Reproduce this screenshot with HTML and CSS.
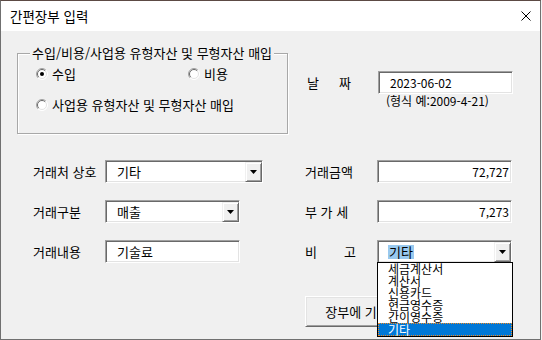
FILE: index.html
```html
<!DOCTYPE html>
<html lang="ko">
<head>
<meta charset="utf-8">
<title>간편장부 입력</title>
<link rel="stylesheet" href="styles.css">
</head>
<body>
<div class="window">
  <div class="titlebar">
    <span class="title">간편장부 입력</span>
    <svg class="close" width="10" height="10" viewBox="0 0 10 10"><path d="M0.5 0.5 L9.5 9.5 M9.5 0.5 L0.5 9.5" stroke="#000" stroke-width="1" fill="none"/></svg>
  </div>
  <div class="content">
    <div class="top">
      <div class="group">
        <div class="group-title">수입/비용/사업용 유형자산 및 무형자산 매입</div>
        <div class="radio-row">
          <label class="radio first">
            <svg class="rb" width="12" height="12" viewBox="0 0 12 12"><circle cx="6" cy="6" r="5.5" fill="#fff"/><path d="M9.9 2.1 A5.5 5.5 0 0 0 2.1 9.9" fill="none" stroke="#a0a0a0"/><path d="M9.2 2.8 A4.5 4.5 0 0 0 2.8 9.2" fill="none" stroke="#696969"/><path d="M2.1 9.9 A5.5 5.5 0 0 0 9.9 2.1" fill="none" stroke="#fff"/><path d="M2.8 9.2 A4.5 4.5 0 0 0 9.2 2.8" fill="none" stroke="#e3e3e3"/><circle cx="6" cy="6" r="2" fill="#000"/></svg>
            <span>수입</span>
          </label>
          <label class="radio">
            <svg class="rb" width="12" height="12" viewBox="0 0 12 12"><circle cx="6" cy="6" r="5.5" fill="#fff"/><path d="M9.9 2.1 A5.5 5.5 0 0 0 2.1 9.9" fill="none" stroke="#a0a0a0"/><path d="M9.2 2.8 A4.5 4.5 0 0 0 2.8 9.2" fill="none" stroke="#696969"/><path d="M2.1 9.9 A5.5 5.5 0 0 0 9.9 2.1" fill="none" stroke="#fff"/><path d="M2.8 9.2 A4.5 4.5 0 0 0 9.2 2.8" fill="none" stroke="#e3e3e3"/></svg>
            <span>비용</span>
          </label>
        </div>
        <div class="radio-row second">
          <label class="radio">
            <svg class="rb" width="12" height="12" viewBox="0 0 12 12"><circle cx="6" cy="6" r="5.5" fill="#fff"/><path d="M9.9 2.1 A5.5 5.5 0 0 0 2.1 9.9" fill="none" stroke="#a0a0a0"/><path d="M9.2 2.8 A4.5 4.5 0 0 0 2.8 9.2" fill="none" stroke="#696969"/><path d="M2.1 9.9 A5.5 5.5 0 0 0 9.9 2.1" fill="none" stroke="#fff"/><path d="M2.8 9.2 A4.5 4.5 0 0 0 9.2 2.8" fill="none" stroke="#e3e3e3"/></svg>
            <span>사업용 유형자산 및 무형자산 매입</span>
          </label>
        </div>
      </div>
      <div class="date-block">
        <div class="date-row">
          <span class="label"><span class="spread w44"><span>날</span><span>짜</span></span></span>
          <div class="field num">2023-06-02</div>
        </div>
        <div class="hint">(형식 예:2009-4-21)</div>
      </div>
    </div>

    <div class="form">
      <span class="label">거래처 상호</span>
      <div class="combo w158">
        <span class="combo-text">기타</span>
        <span class="combo-btn"><svg width="7" height="4" viewBox="0 0 7 4"><path d="M0 0 H7 L3.5 4 Z" fill="#000"/></svg></span>
      </div>
      <span class="spacer"></span>
      <span class="label">거래금액</span>
      <div class="field num right">72,727</div>

      <span class="label">거래구분</span>
      <div class="combo w135">
        <span class="combo-text">매출</span>
        <span class="combo-btn"><svg width="7" height="4" viewBox="0 0 7 4"><path d="M0 0 H7 L3.5 4 Z" fill="#000"/></svg></span>
      </div>
      <span class="spacer"></span>
      <span class="label">부 가 세</span>
      <div class="field num right">7,273</div>

      <span class="label">거래내용</span>
      <div class="field w135">기술료</div>
      <span class="spacer"></span>
      <span class="label"><span class="spread w50"><span>비</span><span>고</span></span></span>
      <div class="combo w135 open">
        <span class="combo-text"><span class="sel-text">기타</span></span>
        <span class="combo-btn"><svg width="7" height="4" viewBox="0 0 7 4"><path d="M0 0 H7 L3.5 4 Z" fill="#000"/></svg></span>
        <ul class="listbox">
          <li>세금계산서</li>
          <li>계산서</li>
          <li>신용카드</li>
          <li>현금영수증</li>
          <li>간이영수증</li>
          <li class="selected">기타</li>
        </ul>
      </div>
    </div>

    <div class="actions">
      <button class="btn">장부에 기록</button>
    </div>
  </div>
</div>
</body>
</html>
```

FILE: styles.css
```css
* { box-sizing: border-box; }
html, body { margin: 0; padding: 0; }
body {
  width: 542px;
  height: 340px;
  overflow: hidden;
  background: #f4f4f4;
  font-family: "Noto Sans CJK KR", "Noto Sans", sans-serif;
  font-size: 13px;
  color: #000;
}
.window {
  width: 541px;
  height: 340px;
  border: 1px solid #707070;
  border-top-color: #5c4a44;
  background: #f0f0f0;
  display: flex;
  flex-direction: column;
}
.titlebar {
  flex: none;
  height: 30px;
  background: #fff;
  display: flex;
  align-items: center;
  justify-content: space-between;
  padding: 0 9px 0 9px;
}
.title { font-size: 13.5px; line-height: 16px; margin-top: -1px; }
.close { display: block; margin-top: -1px; }
.content { flex: 1; display: flex; flex-direction: column; }

.top { display: flex; align-items: flex-start; }
.group {
  margin: 22px 0 0 16px;
  width: 271px;
  height: 81px;
  border: 1px solid #a8a8a8;
  box-shadow: 1px 1px 0 #fff, inset 1px 1px 0 #fff;
  padding-left: 18px;
}
.group-title {
  display: block;
  width: max-content;
  margin: -9px 0 0 -6px;
  padding: 0 2px;
  background: #f0f0f0;
  line-height: 16px;
  white-space: nowrap;
}
.radio-row { display: flex; margin-top: 6px; height: 14px; align-items: center; }
.radio-row.second { margin-top: 17px; }
.radio { display: flex; align-items: center; gap: 4px; line-height: 14px; white-space: nowrap; }
.radio.first { width: 152px; }
.rb { display: block; flex: none; }

.date-block { margin: 40px 0 0 18px; }
.date-row { display: flex; align-items: center; }
.hint { margin-left: 80px; line-height: 14px; font-size: 12px; }

.label { width: 72px; display: flex; align-items: center; white-space: nowrap; }
.spread { display: flex; justify-content: space-between; }
.w44 { width: 44px; margin-left: 1px; }
.w50 { width: 51px; }

.field {
  width: 135px;
  height: 23px;
  background: #fff;
  border: 1px solid;
  border-color: #a0a0a0 #fff #fff #a0a0a0;
  box-shadow: inset 1px 1px 0 #696969, inset -1px -1px 0 #e3e3e3;
  padding: 0 2px 0 11px;
  display: flex;
  align-items: center;
  line-height: 14px;
  white-space: nowrap;
}
.field.num { font-size: 12px; }
.field.right { justify-content: flex-end; }

.form {
  margin: 26px 0 0 32px;
  display: grid;
  grid-template-columns: 72px 158px 42px 72px 135px;
  grid-auto-rows: 23px;
  row-gap: 17px;
  align-items: center;
}
.form > * { justify-self: start; }

.combo {
  position: relative;
  height: 23px;
  background: #fff;
  border: 1px solid;
  border-color: #a0a0a0 #fff #fff #a0a0a0;
  box-shadow: inset 1px 1px 0 #696969, inset -1px -1px 0 #e3e3e3;
  padding: 1px 0 0 1px;
  display: flex;
  align-items: stretch;
}
.w158 { width: 158px; }
.w135 { width: 135px; }
.combo-text { flex: 1; padding-left: 10px; display: flex; align-items: center; line-height: 14px; }
.combo-btn {
  width: 17px;
  flex: none;
  background: #f0f0f0;
  border: 1px solid;
  border-color: #f0f0f0 #696969 #696969 #f0f0f0;
  box-shadow: inset 1px 1px 0 #fff, inset -1px -1px 0 #a0a0a0;
  display: flex;
  align-items: center;
  justify-content: center;
}
.combo-btn svg { display: block; }
.sel-text { background: #99c9ef; padding: 0 1px; margin-left: -1px; line-height: 14px; }

.listbox {
  position: absolute;
  left: -1px;
  top: 100%;
  width: 136px;
  height: 75px;
  margin: 0;
  padding: 0;
  list-style: none;
  background: #fff;
  border: 1px solid #000;
  z-index: 5;
}
.listbox li {
  height: 12px;
  line-height: 12px;
  font-size: 12px;
  padding-left: 10px;
  white-space: nowrap;
}
.listbox li.selected {
  height: 13px;
  background: #0078d7;
  color: #fff;
  border: 1px dotted #f08a24;
  padding-left: 9px;
  line-height: 11px;
}

.actions { margin: 33px 0 0 304px; }
.btn {
  width: 104px;
  height: 31px;
  font: inherit;
  color: #000;
  background: #f0f0f0;
  border: 1px solid;
  border-color: #fff #696969 #696969 #fff;
  box-shadow: inset 1px 1px 0 #e3e3e3, inset -1px -1px 0 #a0a0a0;
  padding: 0;
  white-space: nowrap;
}
```
